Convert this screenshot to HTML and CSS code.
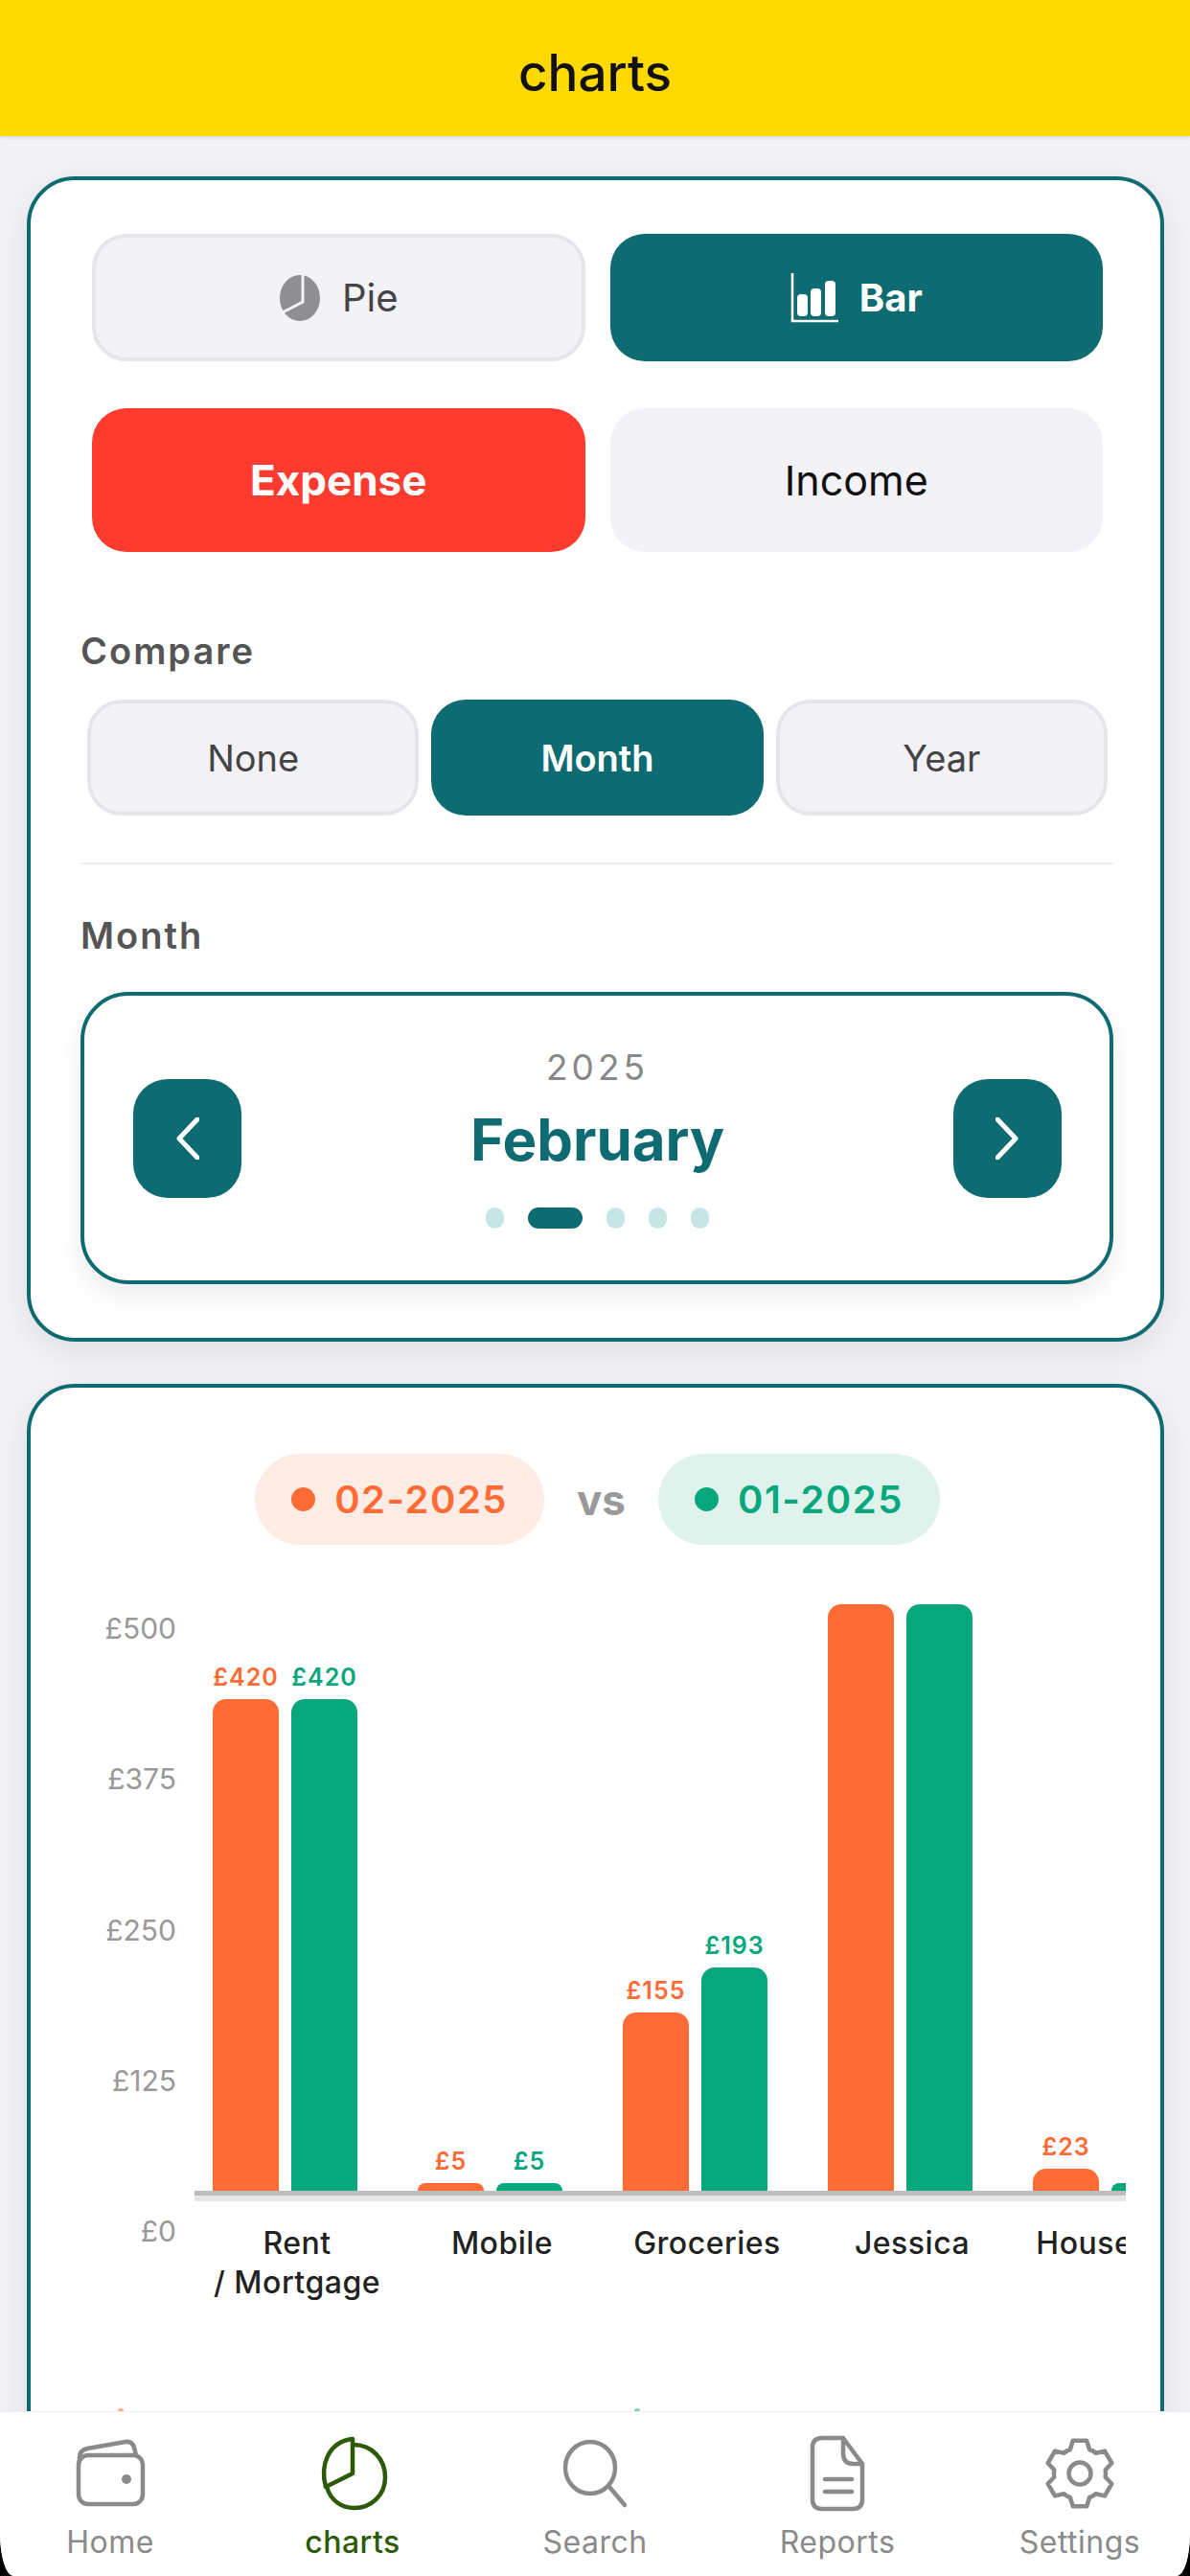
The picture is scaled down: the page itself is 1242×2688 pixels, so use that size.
FILE: index.html
```html
<!DOCTYPE html>
<html lang="en">
<head>
    <meta charset="UTF-8">
    <meta name="viewport" content="width=device-width, initial-scale=1.0">
    <title>charts</title>
    <link rel="stylesheet" href="styles.css">
</head>
<body>
    <div class="app">
        <header class="topbar"><h1>charts</h1></header>

        <main class="content">
            <section class="card card-controls">
                <div class="btn-row type-row">
                    <button class="btn btn-outline">
                        <svg class="btn-icon" width="44" height="50" viewBox="0 0 44 50">
                            <ellipse cx="22" cy="25" rx="21" ry="24" fill="#8e8e93"/>
                            <path d="M25 0V29L2 41" fill="none" stroke="#f2f2f7" stroke-width="3"/>
                        </svg>
                        Pie
                    </button>
                    <button class="btn btn-teal btn-bold">
                        <svg class="btn-icon" width="50" height="54" viewBox="0 0 50 54">
                            <path d="M2 1V51H50" fill="none" stroke="#fff" stroke-width="2.5"/>
                            <rect x="7" y="23" width="11" height="23" rx="4" fill="#fff"/>
                            <rect x="21" y="17" width="11" height="29" rx="4" fill="#fff"/>
                            <rect x="36" y="9" width="11" height="37" rx="4" fill="#fff"/>
                        </svg>
                        Bar
                    </button>
                </div>
                <div class="btn-row kind-row">
                    <button class="btn btn-red btn-bold">Expense</button>
                    <button class="btn btn-plain">Income</button>
                </div>

                <div class="section-label compare-label">Compare</div>
                <div class="compare-row">
                    <button class="btn btn-outline">None</button>
                    <button class="btn btn-teal btn-semi">Month</button>
                    <button class="btn btn-outline">Year</button>
                </div>

                <div class="divider"></div>

                <div class="section-label month-label">Month</div>
                <div class="month-picker">
                    <button class="arrow">
                        <svg width="24" height="44" viewBox="0 0 24 44"><path d="M22 2L3 22L22 42" fill="none" stroke="#fff" stroke-width="5" stroke-linecap="round" stroke-linejoin="round"/></svg>
                    </button>
                    <div class="month-center">
                        <div class="month-year">2025</div>
                        <div class="month-name">February</div>
                        <div class="dots">
                            <span class="dot"></span>
                            <span class="dot dot-active"></span>
                            <span class="dot"></span>
                            <span class="dot"></span>
                            <span class="dot"></span>
                        </div>
                    </div>
                    <button class="arrow">
                        <svg width="24" height="44" viewBox="0 0 24 44"><path d="M2 2L21 22L2 42" fill="none" stroke="#fff" stroke-width="5" stroke-linecap="round" stroke-linejoin="round"/></svg>
                    </button>
                </div>
            </section>

            <section class="card card-chart">
                <div class="legend">
                    <div class="pill pill-orange"><span class="pill-dot"></span>02-2025</div>
                    <div class="vs">vs</div>
                    <div class="pill pill-green"><span class="pill-dot"></span>01-2025</div>
                </div>

                <div class="chart">
                    <div class="y-axis">
                        <span>£500</span>
                        <span>£375</span>
                        <span>£250</span>
                        <span>£125</span>
                        <span>£0</span>
                    </div>
                    <div class="scroller">
                        <div class="col">
                            <div class="bars">
                                <div class="bar-wrap orange"><span class="val">£420</span><div class="bar" style="height: 513px"></div></div>
                                <div class="bar-wrap green"><span class="val">£420</span><div class="bar" style="height: 513px"></div></div>
                            </div>
                            <div class="x-label">Rent<br>/ Mortgage</div>
                        </div>
                        <div class="col">
                            <div class="bars">
                                <div class="bar-wrap orange"><span class="val">£5</span><div class="bar" style="height: 8px"></div></div>
                                <div class="bar-wrap green"><span class="val">£5</span><div class="bar" style="height: 8px"></div></div>
                            </div>
                            <div class="x-label">Mobile</div>
                        </div>
                        <div class="col">
                            <div class="bars">
                                <div class="bar-wrap orange"><span class="val">£155</span><div class="bar" style="height: 186px"></div></div>
                                <div class="bar-wrap green"><span class="val">£193</span><div class="bar" style="height: 233px"></div></div>
                            </div>
                            <div class="x-label">Groceries</div>
                        </div>
                        <div class="col">
                            <div class="bars">
                                <div class="bar-wrap orange"><div class="bar" style="height: 612px"></div></div>
                                <div class="bar-wrap green"><div class="bar" style="height: 612px"></div></div>
                            </div>
                            <div class="x-label">Jessica</div>
                        </div>
                        <div class="col">
                            <div class="bars">
                                <div class="bar-wrap orange"><span class="val">£23</span><div class="bar" style="height: 23px"></div></div>
                                <div class="bar-wrap green"><div class="bar" style="height: 8px"></div></div>
                            </div>
                            <div class="x-label">Household</div>
                        </div>
                    </div>
                </div>

                <div class="peek-row">
                    <span class="peek peek-orange"></span>
                    <span class="peek peek-green"></span>
                </div>
            </section>
        </main>

        <nav class="tabbar">
            <div class="tab">
                <svg width="80" height="80" viewBox="0 0 80 80" class="tab-icon">
                    <rect x="7" y="21" width="67" height="51" rx="10"/>
                    <path d="M8 27V23Q8 16 16 14L56 7Q63 6 65 13L67 21"/>
                    <circle cx="57" cy="46" r="5" class="icon-fill"/>
                </svg>
                <span>Home</span>
            </div>
            <div class="tab tab-active">
                <svg width="80" height="80" viewBox="0 0 80 80" class="tab-icon">
                    <path d="M40 4V40L12 54C6 32 14 7 40 4Z"/>
                    <path d="M41 10C60 10 74 25 74 44C74 63 59 76 42 76C28 76 17 68 13 54"/>
                </svg>
                <span>charts</span>
            </div>
            <div class="tab">
                <svg width="80" height="80" viewBox="0 0 80 80" class="tab-icon">
                    <ellipse cx="35" cy="34" rx="26" ry="27"/>
                    <path d="M55 54L71 73"/>
                </svg>
                <span>Search</span>
            </div>
            <div class="tab">
                <svg width="80" height="80" viewBox="0 0 80 80" class="tab-icon">
                    <path d="M24 3H46L66 30V67Q66 77 56 77H24Q14 77 14 67V13Q14 3 24 3Z"/>
                    <path d="M46 3V19Q46 30 57 30H66"/>
                    <path d="M27 46H55M27 59H55"/>
                </svg>
                <span>Reports</span>
            </div>
            <div class="tab">
                <svg width="80" height="80" viewBox="-40 -40 80 80" class="tab-icon">
                    <path d="M-7.3 -34.2L7.3 -34.2L10.1 -25Q13.5 -24 16.6 -21.3L26 -23.4L33.3 -10.8L26.7 -3.8Q27.5 0 26.7 3.8L33.3 10.8L26 23.4L16.6 21.3Q13.5 24 10.1 25L7.3 34.2L-7.3 34.2L-10.1 25Q-13.5 24 -16.6 21.3L-26 23.4L-33.3 10.8L-26.7 3.8Q-27.5 0 -26.7 -3.8L-33.3 -10.8L-26 -23.4L-16.6 -21.3Q-13.5 -24 -10.1 -25Z"/>
                    <circle r="11.5"/>
                </svg>
                <span>Settings</span>
            </div>
        </nav>
    </div>
</body>
</html>
```

FILE: styles.css
```css
* {
    box-sizing: border-box;
}

html {
    background-color: #000;
}

body {
    margin: 0;
    height: 2688px;
    font-family: 'Inter', 'Liberation Sans', sans-serif;
    color: #333;
}

.app {
    display: flex;
    flex-direction: column;
    height: 100%;
    overflow: hidden;
    background-color: #f2f2f7;
    border-radius: 0 0 14px 14px / 0 0 45px 45px;
}

.topbar {
    flex: none;
    display: flex;
    justify-content: center;
    align-items: center;
    height: 142px;
    padding-top: 10px;
    background-color: #ffd900;
    box-shadow: 0 1px 4px rgba(0, 0, 0, 0.15);
}

.topbar h1 {
    margin: 0;
    font-size: 53px;
    font-weight: 500;
    color: #111;
}

.content {
    flex: 1;
    min-height: 0;
    overflow: hidden;
    padding: 42px 27px 0 28px;
}

.card {
    background-color: #fff;
    border: 4px solid #0f6b72;
    border-radius: 50px;
    box-shadow: 0 10px 36px rgba(0, 0, 0, 0.09);
}

.card-controls {
    height: 1216px;
    padding: 56px 49px 0 52px;
}

.btn {
    display: flex;
    justify-content: center;
    align-items: center;
    font-family: inherit;
    font-size: 40px;
    color: #444;
    border: none;
    border-radius: 36px;
    padding: 0;
}

.btn-outline {
    background-color: #f2f2f7;
    border: 4px solid #e5e5ea;
}

.btn-plain {
    background-color: #f2f2f7;
    color: #111;
}

.btn-teal {
    background-color: #0f6b72;
    color: #fff;
}

.btn-red {
    background-color: #ff3b30;
    color: #fff;
}

.btn-bold {
    font-weight: 700;
}

.btn-semi {
    font-weight: 600;
}

.btn-icon {
    margin-right: 22px;
}

.btn-row {
    display: grid;
    grid-template-columns: 1fr 1fr;
    gap: 26px;
    margin: 0 11px 0 12px;
}

.type-row {
    height: 133px;
}

.kind-row {
    height: 150px;
    margin-top: 49px;
}

.kind-row .btn {
    font-size: 44px;
}

.kind-row .btn-plain {
    font-size: 43px;
}

.section-label {
    height: 46px;
    line-height: 46px;
    font-size: 38px;
    font-weight: 600;
    letter-spacing: 2px;
    color: #555;
}

.compare-label {
    margin-top: 80px;
}

.compare-row {
    display: grid;
    grid-template-columns: 1fr 1fr 1fr;
    gap: 13px;
    height: 121px;
    margin: 28px 6px 0 7px;
}

.compare-row .btn {
    font-size: 38px;
}

.divider {
    height: 2px;
    margin-top: 49px;
    background-color: #eee;
}

.month-label {
    margin-top: 51px;
}

.month-picker {
    display: flex;
    justify-content: space-between;
    align-items: center;
    height: 305px;
    margin-top: 36px;
    padding: 0 50px 0 51px;
    border: 4px solid #0f6b72;
    border-radius: 50px;
    box-shadow: 0 12px 30px rgba(0, 0, 0, 0.08);
}

.arrow {
    display: flex;
    justify-content: center;
    align-items: center;
    width: 113px;
    height: 124px;
    padding: 0;
    border: none;
    border-radius: 36px;
    background-color: #0f6b72;
}

.month-center {
    display: flex;
    flex-direction: column;
    align-items: center;
}

.month-year {
    line-height: 40px;
    font-size: 37px;
    letter-spacing: 4px;
    color: #888;
}

.month-name {
    margin-top: 17px;
    line-height: 76px;
    font-size: 60px;
    font-weight: 700;
    color: #0f6b72;
}

.dots {
    display: flex;
    gap: 25px;
    margin-top: 33px;
}

.dot {
    width: 19px;
    height: 22px;
    border-radius: 11px;
    background-color: #c5e6e4;
}

.dot-active {
    width: 57px;
    background-color: #0f6b72;
}

.card-chart {
    margin-top: 44px;
    padding-top: 69px;
    height: 1200px;
}

.legend {
    display: flex;
    justify-content: center;
    align-items: center;
    gap: 34px;
    padding-left: 4px;
}

.pill {
    display: flex;
    align-items: center;
    gap: 20px;
    height: 95px;
    padding: 0 38px;
    border-radius: 48px;
    font-size: 40px;
    font-weight: 600;
    letter-spacing: 1.5px;
}

.pill-dot {
    width: 25px;
    height: 25px;
    border-radius: 50%;
    background-color: currentColor;
}

.pill-orange {
    background-color: #ffede5;
    color: #ff6b35;
}

.pill-green {
    background-color: #dff3ec;
    color: #06a77d;
}

.vs {
    font-size: 44px;
    font-weight: 700;
    color: #999;
}

.chart {
    display: flex;
    margin-top: 62px;
    padding-left: 51px;
}

.y-axis {
    flex: none;
    display: flex;
    flex-direction: column;
    justify-content: space-between;
    align-items: flex-end;
    width: 101px;
    height: 665px;
    margin-top: 7px;
    margin-right: 19px;
    font-size: 30px;
    line-height: 36px;
    color: #999;
}

.scroller {
    display: flex;
    width: 972px;
    overflow: hidden;
}

.col {
    flex: none;
    width: 214px;
}

.bars {
    display: flex;
    align-items: flex-end;
    gap: 13px;
    height: 612px;
    padding-left: 19px;
    position: relative;
}

.bars::after {
    content: "";
    position: absolute;
    left: 0;
    right: 0;
    top: 100%;
    height: 11px;
    background: linear-gradient(#bdbdbd 0, #bdbdbd 5px, #e6e6e6 5px, #e6e6e6 100%);
}

.bar-wrap {
    flex: none;
    display: flex;
    flex-direction: column;
    align-items: center;
    width: 69px;
}

.val {
    margin-bottom: 8px;
    line-height: 30px;
    font-size: 25px;
    font-weight: 600;
    letter-spacing: 1px;
}

.bar {
    width: 100%;
    border-radius: 14px 14px 0 0;
    background-color: currentColor;
}

.orange {
    color: #ff6b35;
}

.green {
    color: #06a77d;
}

.x-label {
    margin-top: 34px;
    text-align: center;
    line-height: 41px;
    font-size: 32px;
    font-weight: 500;
    letter-spacing: 0.5px;
    white-space: nowrap;
    color: #222;
}

.peek-row {
    display: flex;
    gap: 533px;
    margin-top: 111px;
    padding-left: 91px;
}

.peek {
    width: 6px;
    height: 6px;
    border-radius: 3px;
}

.peek-orange {
    background-color: #ffa88a;
}

.peek-green {
    background-color: #7fd3bd;
}

.tabbar {
    flex: none;
    display: grid;
    grid-template-columns: repeat(5, 253px);
    justify-content: center;
    position: relative;
    height: 172px;
    padding-top: 24px;
    background-color: #fff;
    border-top: 1px solid #f0f0f0;
}

.tab {
    display: flex;
    flex-direction: column;
    align-items: center;
    font-size: 32px;
    line-height: 36px;
    letter-spacing: 0.5px;
    color: #8a8a8a;
}

.tab span {
    margin-top: 14px;
}

.tab-icon {
    display: block;
    fill: none;
    stroke: #8a8a8a;
    stroke-width: 4.5;
    stroke-linecap: round;
    stroke-linejoin: round;
}

.icon-fill {
    fill: #8a8a8a;
    stroke: none;
}

.tab-active {
    color: #2d5a06;
    font-weight: 500;
}

.tab-active .tab-icon {
    stroke: #2d5a06;
}
```
